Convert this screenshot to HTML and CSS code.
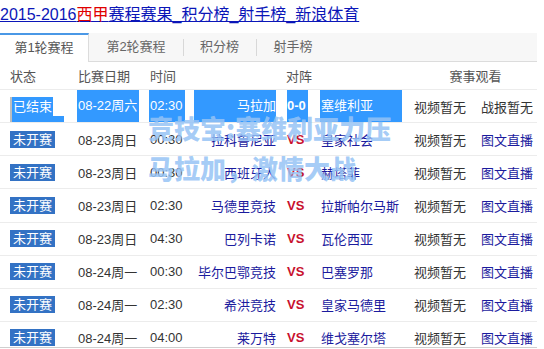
FILE: index.html
```html
<!DOCTYPE html>
<html lang="zh-CN">
<head>
    <meta charset="UTF-8">
    <meta name="viewport" content="width=device-width, initial-scale=1.0">
    <title>2015-2016西甲赛程赛果</title>
    <link rel="stylesheet" href="styles.css">
</head>
<body>
    <div class="page">
        <h1 class="title"><a href="#">2015-2016<span class="league">西甲</span>赛程赛果_积分榜_射手榜_新浪体育</a></h1>

        <div class="tabs">
            <span class="tab active">第1轮赛程</span>
            <span class="tab">第2轮赛程</span>
            <span class="tab sep">积分榜</span>
            <span class="tab sep">射手榜</span>
        </div>

        <div class="schedule">
            <div class="row head">
                <span class="state">状态</span>
                <span class="date">比赛日期</span>
                <span class="time">时间</span>
                <span class="match">对阵</span>
                <span class="watch">赛事观看</span>
            </div>

            <!-- first row is shown as selected text -->
            <div class="row picked">
                <span class="state"><span class="hl hl-state">已结束</span><span class="hl hl-tail"></span></span>
                <span class="date"><span class="hl hl-text">08-22周六</span></span>
                <span class="time"><span class="hl hl-text">02:30</span></span>
                <span class="home"><span class="hl hl-team">马拉加</span></span>
                <span class="vs"><span class="hl hl-score">0-0</span></span>
                <span class="away"><span class="hl hl-team">塞维利亚</span></span>
                <span class="video">视频暂无</span>
                <span class="live off">战报暂无</span>
            </div>

            <div class="row">
                <span class="state"><span class="badge">未开赛</span></span>
                <span class="date">08-23周日</span>
                <span class="time">00:30</span>
                <span class="home">拉科鲁尼亚</span>
                <span class="vs">VS</span>
                <span class="away">皇家社会</span>
                <span class="video">视频暂无</span>
                <span class="live">图文直播</span>
            </div>

            <div class="row">
                <span class="state"><span class="badge">未开赛</span></span>
                <span class="date">08-23周日</span>
                <span class="time">00:30</span>
                <span class="home">西班牙人</span>
                <span class="vs">VS</span>
                <span class="away">赫塔菲</span>
                <span class="video">视频暂无</span>
                <span class="live">图文直播</span>
            </div>

            <div class="row">
                <span class="state"><span class="badge">未开赛</span></span>
                <span class="date">08-23周日</span>
                <span class="time">02:30</span>
                <span class="home">马德里竞技</span>
                <span class="vs">VS</span>
                <span class="away">拉斯帕尔马斯</span>
                <span class="video">视频暂无</span>
                <span class="live">图文直播</span>
            </div>

            <div class="row">
                <span class="state"><span class="badge">未开赛</span></span>
                <span class="date">08-23周日</span>
                <span class="time">04:30</span>
                <span class="home">巴列卡诺</span>
                <span class="vs">VS</span>
                <span class="away">瓦伦西亚</span>
                <span class="video">视频暂无</span>
                <span class="live">图文直播</span>
            </div>

            <div class="row">
                <span class="state"><span class="badge">未开赛</span></span>
                <span class="date">08-24周一</span>
                <span class="time">00:30</span>
                <span class="home">毕尔巴鄂竞技</span>
                <span class="vs">VS</span>
                <span class="away">巴塞罗那</span>
                <span class="video">视频暂无</span>
                <span class="live">图文直播</span>
            </div>

            <div class="row">
                <span class="state"><span class="badge">未开赛</span></span>
                <span class="date">08-24周一</span>
                <span class="time">02:30</span>
                <span class="home">希洪竞技</span>
                <span class="vs">VS</span>
                <span class="away">皇家马德里</span>
                <span class="video">视频暂无</span>
                <span class="live">图文直播</span>
            </div>

            <div class="row">
                <span class="state"><span class="badge">未开赛</span></span>
                <span class="date">08-24周一</span>
                <span class="time">04:00</span>
                <span class="home">莱万特</span>
                <span class="vs">VS</span>
                <span class="away">维戈塞尔塔</span>
                <span class="video">视频暂无</span>
                <span class="live">图文直播</span>
            </div>
        </div>

        <div class="watermark">竞技宝:塞维利亚力压<br>马拉加，激情大战</div>
    </div>
</body>
</html>
```

FILE: styles.css
```css
* {
    margin: 0;
    padding: 0;
    box-sizing: border-box;
}

body {
    font-family: "Liberation Sans", "Noto Sans CJK SC", sans-serif;
    font-size: 13px;
    color: #333;
    background-color: #fff;
}

.page {
    position: relative;
    width: 537px;
    height: 348px;
    overflow: hidden;
    border-bottom: 1px solid #cfcfcf;
}

/* title link */
.title {
    font-size: 16px;
    font-weight: normal;
    line-height: 20px;
    padding-top: 5px;
    margin-bottom: 8px;
}

.title a {
    color: #0b16b8;
    text-decoration: underline;
}

.title .league {
    color: #e00000;
}

/* tabs */
.tabs {
    display: flex;
    height: 29px;
    background-color: #f7f7f7;
    border-bottom: 1px solid #dcdcdc;
}

.tab {
    height: 28px;
    line-height: 28px;
    text-align: center;
    color: #666;
}

.tab:nth-child(1) { width: 89px; }
.tab:nth-child(2) { width: 94px; }
.tab:nth-child(3) { width: 73px; }
.tab:nth-child(4) { width: 74px; }

.tab.sep {
    background: linear-gradient(#d8d8d8, #d8d8d8) left center / 1px 17px no-repeat;
}

.tab.active {
    height: 29px;
    line-height: 26px;
    background-color: #fff;
    border-top: 2px solid #4a98e6;
    border-right: 1px solid #dcdcdc;
    color: #555;
}

/* schedule table */
.row {
    display: grid;
    grid-template-columns: 68px 72px 44px 96px 40px 94px 67px 56px;
    align-items: center;
    height: 33.14px;
    border-bottom: 1px solid #ececec;
    white-space: nowrap;
}

.row.head {
    height: 28px;
    color: #555;
}

.state,
.date,
.time {
    padding-left: 10px;
}

.match {
    grid-column: 4 / 7;
    text-align: center;
}

.watch {
    grid-column: 7 / 9;
    text-align: center;
}

.home {
    padding: 0 4px 0 10px;
    text-align: right;
    color: #1b1b9e;
}

.vs {
    padding-left: 7px;
    font-weight: bold;
    color: #c8102e;
}

.away {
    padding-left: 1px;
    color: #1b1b9e;
}

.live {
    color: #1b1b9e;
}

.live.off {
    color: #333;
}

.badge {
    display: inline-block;
    padding: 0 3px;
    line-height: 17px;
    background-color: #3372c4;
    color: #fff;
}

/* selected first row */
.hl {
    display: inline-block;
    height: 32px;
    line-height: 32px;
    background-color: #3399ff;
    color: #fff;
}

.picked .state {
    display: flex;
    align-items: flex-end;
    align-self: end;
}

.hl-state {
    height: 25px;
    line-height: 19px;
    padding: 0 1px;
    border-left: 2px solid #bdbdbd;
}

.hl-tail {
    width: 11px;
    height: 6px;
}

.hl-text {
    margin-left: -1px;
    padding: 0 2px 0 1px;
}

.hl-team {
    display: block;
    width: 82px;
}

.away .hl-team {
    margin-left: -1px;
    padding-left: 1px;
}

.hl-score {
    padding-right: 2px;
}

/* overlay text */
.watermark {
    position: absolute;
    left: 148px;
    top: 108px;
    font-family: "Noto Sans CJK SC", sans-serif;
    font-size: 26px;
    font-weight: 900;
    line-height: 40px;
    color: rgba(150, 195, 245, 0.86);
    white-space: nowrap;
}
```
